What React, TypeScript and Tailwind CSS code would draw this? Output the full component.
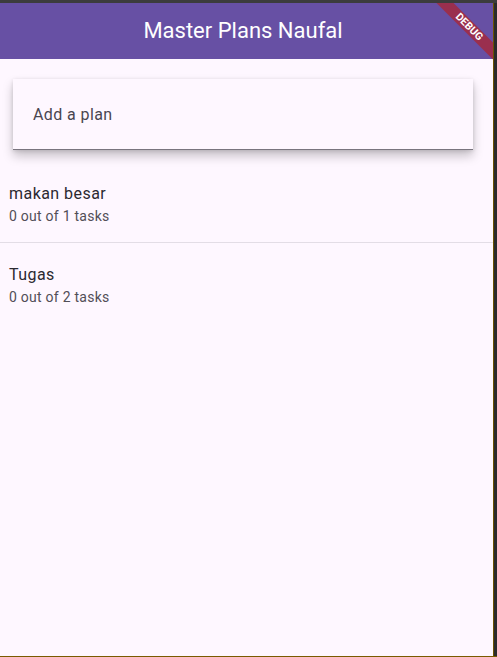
import React from "react";

type Plan = {
  name: string;
  done: number;
  total: number;
};

const plans: Plan[] = [
  { name: "makan besar", done: 0, total: 1 },
  { name: "Tugas", done: 0, total: 2 },
];

const App: React.FC = () => {
  return (
    <div
      className="w-[497px] h-[657px] flex flex-col bg-[#2d2d2d] overflow-hidden"
      style={{ fontFamily: "Roboto, 'Noto Sans', sans-serif" }}
    >
      {/* window chrome top */}
      <div className="h-[3px] bg-[#3c3c3c]" />

      <div className="flex flex-1 min-h-0">
        <div className="relative flex-1 flex flex-col bg-[#fef7ff] overflow-hidden">
          {/* app bar */}
          <header className="h-[56px] shrink-0 bg-[#6750a4] flex items-center justify-center pr-[7px]">
            <h1 className="text-[22px] text-white leading-none pb-[1px]">
              Master Plans Naufal
            </h1>
          </header>

          {/* add plan field */}
          <div className="pt-[20px] pl-[13px] pr-[20px]">
            <div className="h-[71px] bg-[#fef7ff] border-b border-[#79747e] shadow-[0_6px_10px_rgba(0,0,0,0.22),0_1px_4px_rgba(0,0,0,0.12)] flex items-center px-[20px] pt-[2px]">
              <span className="text-[16px] text-[#49454f] tracking-[0.4px]">
                Add a plan
              </span>
            </div>
          </div>

          {/* plans list */}
          <div className="flex flex-col pt-[12px]">
            {plans.map((plan, i) => (
              <div key={plan.name}>
                {i > 0 && <div className="h-px bg-[#e3dde6]" />}
                <div className="h-[80px] px-[9px] flex flex-col pt-[20px]">
                  <span className="text-[16px] leading-[24px] text-[#2b2930] tracking-[0.45px]">
                    {plan.name}
                  </span>
                  <span className="text-[14px] leading-[20px] text-[#524e57] tracking-[0.25px]">
                    {plan.done} out of {plan.total} tasks
                  </span>
                </div>
              </div>
            ))}
          </div>

          {/* debug banner */}
          <div className="absolute top-[18px] right-[-16px] w-[80px] h-[12px] rotate-45 bg-[#b71c1c]/[0.63] flex items-center justify-center">
            <span className="text-[10.5px] font-bold text-white leading-none">
              DEBUG
            </span>
          </div>
        </div>
        {/* window chrome right */}
        <div className="w-[4px] flex">
          <div className="w-px bg-[#6b5200]" />
          <div className="flex-1 bg-[#2b2b2b]" />
        </div>
      </div>

      {/* window chrome bottom */}
      <div className="h-px bg-[#7a5a00]" />
    </div>
  );
};

export default App;
